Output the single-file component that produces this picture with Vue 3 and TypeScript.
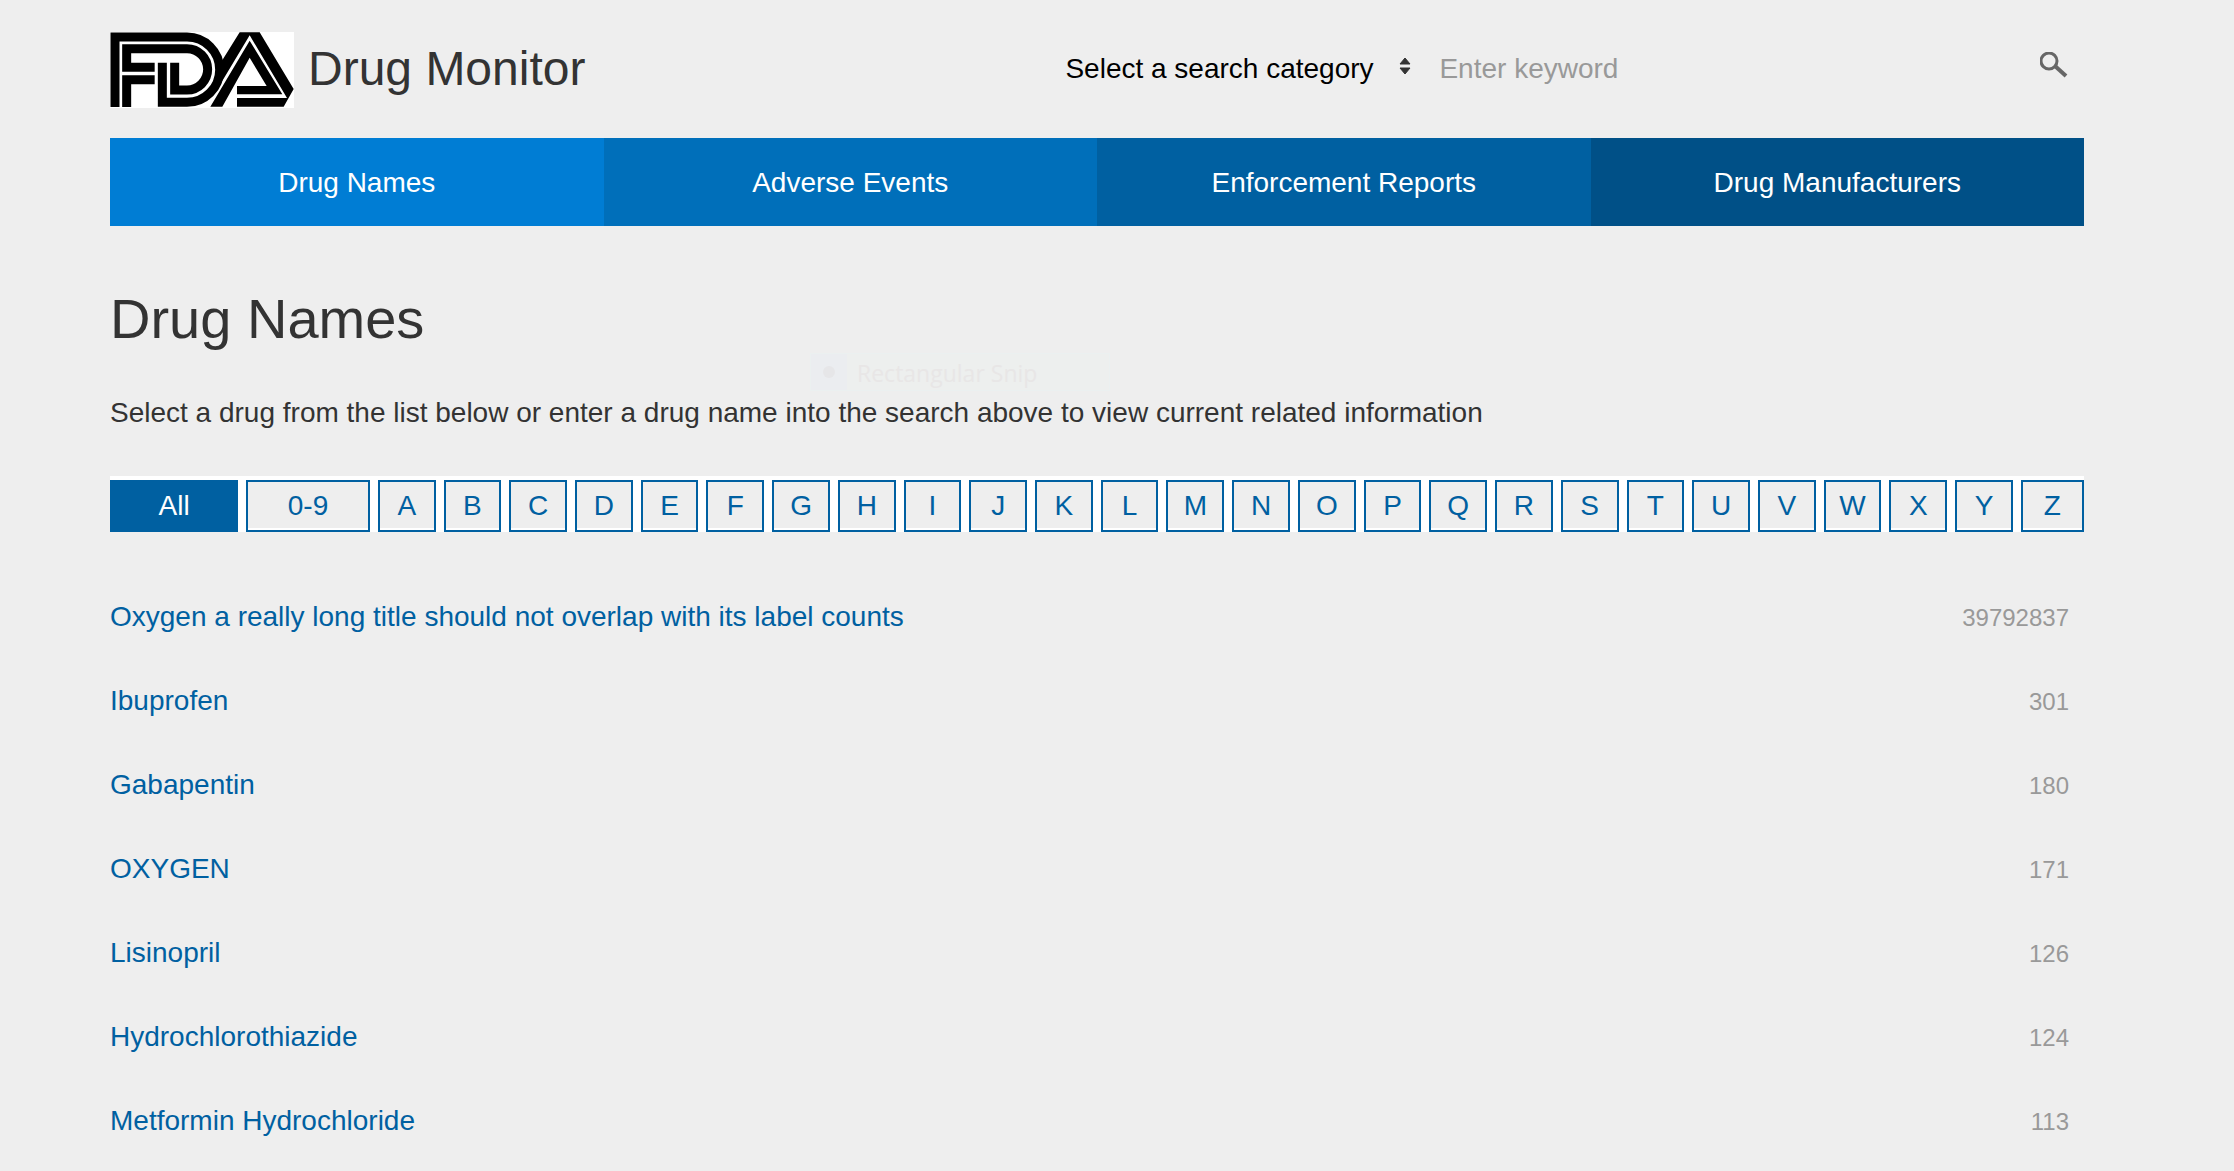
<script setup lang="ts">
import { ref } from 'vue'

interface Drug {
  name: string
  count: number
}

const tabs = ['Drug Names', 'Adverse Events', 'Enforcement Reports', 'Drug Manufacturers']
const filters = ['All', '0-9', ...'ABCDEFGHIJKLMNOPQRSTUVWXYZ']
const activeFilter = ref('All')
const category = ref('')
const keyword = ref('')

const drugs: Drug[] = [
  { name: 'Oxygen a really long title should not overlap with its label counts', count: 39792837 },
  { name: 'Ibuprofen', count: 301 },
  { name: 'Gabapentin', count: 180 },
  { name: 'OXYGEN', count: 171 },
  { name: 'Lisinopril', count: 126 },
  { name: 'Hydrochlorothiazide', count: 124 },
  { name: 'Metformin Hydrochloride', count: 113 },
]
</script>

<template>
  <div class="page">
    <header class="header">
      <a class="brand" href="#">
        <svg class="logo" viewBox="31 36 552 228" role="img" aria-label="FDA">
          <rect x="31" y="36" width="552" height="228" fill="#fff" />
          <g fill="none" stroke="#000" stroke-width="27">
            <path d="M46 261V51H262A98 98 0 0 1 262 247H188V128" />
            <path d="M81 261V179H165" />
            <path d="M165 142H81V86H262A62 62 0 0 1 262 210H225V128" />
          </g>
          <path d="M420 37H480L582 207L552 260H412V234H562L450 46L348 216L336 226L346 190L350 150L345 110L365 125Z" />
          <path fill-rule="evenodd" d="M450 62L548 223H412V198H501L450 113L368 260H332Z" />
        </svg>
        <span>Drug Monitor</span>
      </a>
      <form class="search" @submit.prevent>
        <span class="picker">
          <select v-model="category" aria-label="Search category">
            <option value="">Select a search category</option>
            <option v-for="tab in tabs" :key="tab" :value="tab">{{ tab }}</option>
          </select>
          <svg class="arrows" viewBox="0 0 12 18" aria-hidden="true">
            <path d="M1 7L6 1L11 7ZM1 11H11L6 17Z" fill="#333" stroke="#333" />
          </svg>
        </span>
        <input v-model="keyword" type="text" placeholder="Enter keyword" aria-label="Keyword" />
        <button type="submit" aria-label="Search">
          <svg viewBox="0 0 28 26" fill="none" stroke="#666" aria-hidden="true">
            <circle cx="9" cy="9" r="8" stroke-width="3" />
            <path d="M15 14L26 24" stroke-width="4" />
          </svg>
        </button>
      </form>
    </header>

    <nav class="tabs">
      <a v-for="tab in tabs" :key="tab" href="#">{{ tab }}</a>
    </nav>

    <main class="content">
      <div class="snip" aria-hidden="true">
        <span class="snip-mark"><i></i></span>
        <span>Rectangular Snip</span>
      </div>
      <h1>Drug Names</h1>
      <p>Select a drug from the list below or enter a drug name into the search above to view current related information</p>

      <ul class="filters">
        <li v-for="item in filters" :key="item">
          <button type="button" :class="{ active: item === activeFilter }" @click="activeFilter = item">{{ item }}</button>
        </li>
      </ul>

      <ul class="drugs">
        <li v-for="drug in drugs" :key="drug.name">
          <a href="#">{{ drug.name }}</a>
          <span>{{ drug.count }}</span>
        </li>
      </ul>
    </main>
  </div>
</template>

<style>
body {
  margin: 0;
  background: #eee;
}
</style>

<style scoped>
.page {
  padding: 32px 150px 0 110px;
  font: 28px/32px "Liberation Sans", Arial, sans-serif;
  color: #333;
}

a {
  color: inherit;
  text-decoration: none;
}

ul {
  margin: 0;
  padding: 0;
  list-style: none;
}

button,
input,
select {
  box-sizing: border-box;
  margin: 0;
  padding: 0;
  border: 0;
  border-radius: 0;
  background: transparent;
  font: inherit;
  outline: 0;
}

.header {
  display: flex;
  justify-content: space-between;
  align-items: flex-start;
  margin-bottom: 30px;
}

.brand {
  display: flex;
  align-items: center;
  gap: 14px;
  font-size: 48px;
  line-height: 56px;
  white-space: nowrap;
}

.brand span {
  padding-bottom: 2px;
}

.logo {
  display: block;
  width: 184px;
  height: 76px;
}

.search {
  display: flex;
  align-items: center;
  width: 51.6%;
  height: 74px;
}

.picker {
  display: grid;
  align-items: center;
  width: 346px;
  margin-right: 28px;
}

.picker > * {
  grid-area: 1 / 1;
}

.picker select {
  width: 100%;
  height: 36px;
  appearance: none;
  color: #000;
}

.arrows {
  justify-self: end;
  width: 12px;
  height: 18px;
  margin-bottom: 6px;
  pointer-events: none;
}

.search input {
  flex: 1;
  min-width: 0;
  height: 36px;
  color: #333;
}

.search input::placeholder {
  color: #999;
  opacity: 1;
}

.search button {
  padding: 0 16px 8px;
}

.search button svg {
  display: block;
  width: 28px;
  height: 26px;
}

.tabs {
  display: grid;
  grid-template-columns: repeat(4, 1fr);
}

.tabs a {
  padding: 29px 0 27px;
  color: #fff;
  text-align: center;
  background: #007dd4;
}

.tabs a:nth-child(2) {
  background: #006fba;
}

.tabs a:nth-child(3) {
  background: #0060a1;
}

.tabs a:nth-child(4) {
  background: #005087;
}

.content {
  position: relative;
}

.snip {
  position: absolute;
  top: 127px;
  left: 700px;
  display: flex;
  gap: 10px;
  box-sizing: border-box;
  width: 300px;
  height: 38px;
  border: 1px solid #ebf0f0;
  background: #edefee;
  font: 23px/38px "Open Sans", sans-serif;
  color: #e8e6e6;
}

.snip-mark {
  display: flex;
  align-items: center;
  justify-content: center;
  width: 36px;
  background: #ebedf0;
}

.snip-mark i {
  width: 12px;
  height: 12px;
  border-radius: 50%;
  background: #e6e6e8;
}

h1 {
  margin: 0;
  padding-top: 61px;
  font-size: 56px;
  line-height: 64px;
  font-weight: 400;
}

p {
  margin: 46px 0 47px;
}

.filters {
  display: flex;
  padding-top: 4px;
  background: #fff;
}

.filters li {
  box-sizing: border-box;
  width: 3.33%;
  padding-right: 8px;
}

.filters li:nth-child(1) {
  width: 6.9%;
}

.filters li:nth-child(2) {
  width: 6.67%;
}

.filters li:last-child {
  flex: 1;
  padding-right: 0;
}

.filters button {
  display: block;
  width: 100%;
  height: 52px;
  border: 2px solid #0060a1;
  background: #eee;
  box-shadow: inset 0 -2px #fff;
  color: #0060a1;
}

.filters button.active {
  background: #0060a1;
  box-shadow: none;
  color: #fff;
}

.drugs {
  margin-top: 43px;
}

.drugs li {
  display: flex;
  align-items: baseline;
  justify-content: space-between;
  gap: 28px;
  padding: 26px 15px 26px 0;
}

.drugs a {
  color: #0060a1;
}

.drugs span {
  font-size: 24px;
  line-height: 24px;
  color: #999;
}
</style>
